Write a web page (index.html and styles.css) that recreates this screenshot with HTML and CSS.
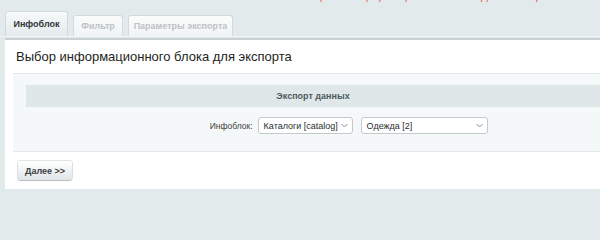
FILE: index.html
```html
<!DOCTYPE html>
<html lang="ru">
<head>
<meta charset="utf-8">
<title>Экспорт</title>
<link rel="stylesheet" href="styles.css">
</head>
<body>
<div class="notice"><span class="notice-text">Ошибка: выберите информационный блок для экспорта</span></div>
<div class="tabs">
  <div class="tab tab-active">Инфоблок</div>
  <div class="tab tab-off">Фильтр</div>
  <div class="tab tab-off">Параметры экспорта</div>
</div>
<div class="panel">
  <div class="title">Выбор информационного блока для экспорта</div>
  <div class="form">
    <div class="form-head">Экспорт данных</div>
    <div class="form-row">
      <div class="form-label">Инфоблок:</div>
      <div class="form-field">
        <div class="select select-type"><span>Каталоги [catalog]</span><svg class="chev" width="7" height="5" viewBox="0 0 7 5"><path d="M0.5 1 L3.5 4 L6.5 1" fill="none" stroke="#8a9196" stroke-width="1"/></svg></div>
        <div class="select select-block"><span>Одежда [2]</span><svg class="chev" width="7" height="5" viewBox="0 0 7 5"><path d="M0.5 1 L3.5 4 L6.5 1" fill="none" stroke="#8a9196" stroke-width="1"/></svg></div>
      </div>
    </div>
  </div>
  <div class="actions">
    <div class="btn">Далее &gt;&gt;</div>
  </div>
</div>
</body>
</html>
```

FILE: styles.css
```css
html, body {
  margin: 0;
  padding: 0;
}
body {
  background: #e3eaec;
  font-family: "Liberation Sans", Arial, sans-serif;
  color: #333;
  overflow: hidden;
  width: 600px;
  height: 217px;
}
.notice {
  height: 3px;
  overflow: hidden;
  position: relative;
}
.notice-text {
  display: block;
  position: absolute;
  left: 240px;
  top: -12px;
  font-size: 12px;
  line-height: 14px;
  color: #e4674f;
  white-space: nowrap;
}
.tabs {
  display: flex;
  align-items: flex-end;
  gap: 5px;
  padding-left: 5px;
  margin-top: 8px;
  height: 25px;
  border-bottom: 1px solid #f0f4f5;
}
.tab {
  box-sizing: border-box;
  font-size: 9px;
  font-weight: bold;
  border: 1px solid #d3dadd;
  border-bottom: none;
  border-radius: 3px 3px 0 0;
  display: flex;
  align-items: center;
  justify-content: center;
}
.tab-active {
  width: 63px;
  height: 25px;
  color: #2f3538;
  background: linear-gradient(#f7f9fa, #e4eaec);
}
.tab-off {
  height: 21px;
  color: #bcc2c5;
  background: linear-gradient(#fbfcfc, #f1f4f5);
}
.tab-off:nth-child(2) { width: 50px; }
.tab-off:nth-child(3) { width: 105px; }
.panel {
  margin-left: 5px;
  margin-top: 1px;
  background: #fff;
  border-top: 2px solid #c9d1d4;
  padding-bottom: 9px;
}
.title {
  font-size: 13px;
  color: #1d1f20;
  padding: 9px 0 0 11px;
  height: 24px;
  box-sizing: content-box;
}
.form {
  margin-left: 8px;
  background: #f5f8f9;
  border-top: 1px solid #e2e8ea;
  border-bottom: 1px solid #e2e8ea;
  padding: 11px 0 17px 13px;
}
.form-head {
  height: 22px;
  background: #e0e7e9;
  font-size: 9px;
  font-weight: bold;
  color: #4c5a5f;
  display: flex;
  align-items: center;
  justify-content: center;
}
.form-row {
  display: grid;
  grid-template-columns: 40% 60%;
  margin-top: 10px;
  align-items: center;
}
.form-label {
  text-align: right;
  padding-right: 3px;
  font-size: 8.5px;
  color: #3b3f41;
}
.form-field {
  display: flex;
  gap: 8px;
  padding-left: 2px;
}
.select {
  box-sizing: border-box;
  height: 17px;
  background: #fff;
  border: 1px solid #c3c9cc;
  border-radius: 3px;
  display: flex;
  align-items: center;
  justify-content: space-between;
  padding: 0 4px 0 5px;
  font-size: 9px;
  color: #2b2f31;
  white-space: nowrap;
  overflow: hidden;
}
.select-type { width: 95px; }
.select-block { width: 127px; }
.chev { display: block; flex-shrink: 0; }
.actions {
  padding: 9px 0 0 13px;
}
.btn {
  box-sizing: border-box;
  width: 54px;
  height: 19px;
  border-radius: 3px;
  background: linear-gradient(#ffffff, #dfe5e8);
  box-shadow: 0 1px 1px rgba(0,0,0,0.18), 0 0 0 1px #dde3e6;
  font-size: 9px;
  font-weight: bold;
  color: #3a4042;
  display: flex;
  align-items: center;
  justify-content: center;
}
```
